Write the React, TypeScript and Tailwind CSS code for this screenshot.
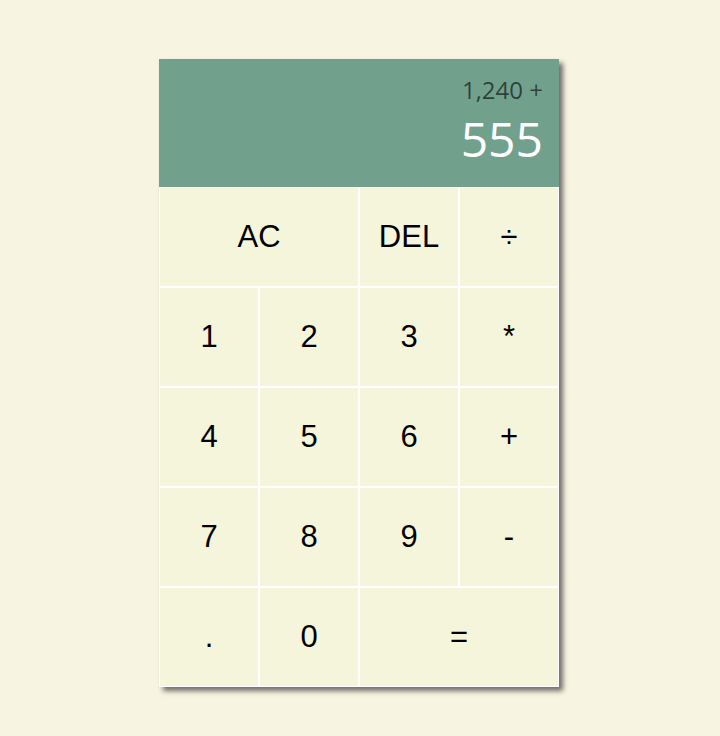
import React from 'react';

const keys: { label: string; wide?: boolean }[] = [
  { label: 'AC', wide: true },
  { label: 'DEL' },
  { label: '÷' },
  { label: '1' },
  { label: '2' },
  { label: '3' },
  { label: '*' },
  { label: '4' },
  { label: '5' },
  { label: '6' },
  { label: '+' },
  { label: '7' },
  { label: '8' },
  { label: '9' },
  { label: '-' },
  { label: '.' },
  { label: '0' },
  { label: '=', wide: true },
];

export default function App() {
  return (
    <div className="min-h-[736px] w-full bg-[#f7f4e2] pt-[59px] pl-[159px]">
      <div className="w-[400px] shadow-[4px_4px_5px_rgba(0,0,0,0.55)]">
        <div
          className="flex h-[128px] flex-col items-end justify-end bg-[#71a08d] pr-[16px] pb-[16px]"
          style={{ fontFamily: '"Open Sans", sans-serif' }}
        >
          <div className="-mb-[1px] text-[24px] leading-[1.36] text-black/60">1,240 +</div>
          <div className="text-[48px] leading-[1.36] text-white">555</div>
        </div>
        <div className="grid grid-cols-4" style={{ fontFamily: '"Liberation Sans", Arial, sans-serif' }}>
          {keys.map((k) => (
            <button
              key={k.label}
              className={`flex h-[100px] items-center justify-center border border-white bg-[#f5f5dc] text-[31px] text-black ${k.wide ? 'col-span-2' : ''}`}
            >
              {k.label}
            </button>
          ))}
        </div>
      </div>
    </div>
  );
}
